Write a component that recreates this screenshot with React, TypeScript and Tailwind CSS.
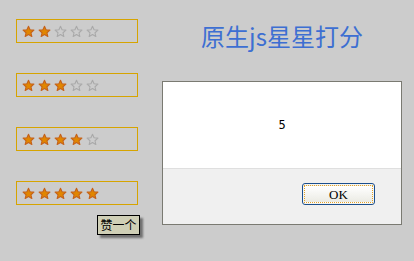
import React from "react";

const STAR = "M12 2.2l2.9 6.6 7.1.7-5.4 4.8 1.6 7-6.2-3.7-6.2 3.7 1.6-7-5.4-4.8 7.1-.7z";

const Star = ({ on }: { on: boolean }) => (
  <svg width="13" height="13" viewBox="0 0 24 24" className="block">
    <path
      d={STAR}
      fill={on ? "#e18600" : "#cccccc"}
      stroke={on ? "#c4621c" : "#a9a9a9"}
      strokeWidth="2"
      strokeLinejoin="round"
    />
  </svg>
);

const Rating = ({ value, tip }: { value: number; tip?: boolean }) => (
  <div className="relative w-[122px] h-[24px] border border-[#d6a400] flex items-center pl-[5px] gap-[3px]">
    {[1, 2, 3, 4, 5].map((n) => (
      <Star key={n} on={n <= value} />
    ))}
    {tip && (
      <div className="absolute left-[80px] top-[33px] w-[43px] h-[20px] border border-black bg-[#cfcfb6] flex items-center justify-center text-[12px] leading-none text-black shadow-[3px_3px_2px_rgba(0,0,0,0.45)] font-['Noto_Sans_CJK_SC',sans-serif]">
        赞一个
      </div>
    )}
  </div>
);

export default function App() {
  return (
    <div className="w-[414px] h-[261px] bg-[#cccccc] flex overflow-hidden">
      <div className="w-[162px] pl-[16px] pt-[19px] flex flex-col gap-[30px]">
        <Rating value={2} />
        <Rating value={3} />
        <Rating value={4} />
        <Rating value={5} tip />
      </div>
      <div className="w-[240px] flex flex-col items-center">
        <h1 className="mt-[24px] h-[24px] text-[24px] leading-[24px] text-[#3d6fd2] font-['Noto_Sans_CJK_SC',sans-serif] whitespace-nowrap">
          原生js星星打分
        </h1>
        <div className="mt-[33px] w-[240px] h-[144px] border border-[#7a7a72] flex flex-col">
          <div className="h-[87px] bg-white border-b border-[#dfdfdf] flex items-center justify-center text-[12px] text-black font-['DejaVu_Sans_Mono',monospace]">
            5
          </div>
          <div className="flex-1 bg-[#f0f0f0] flex justify-end items-start pt-[14px] pr-[26px]">
            <div className="w-[73px] h-[22px] rounded-[3px] border border-[#1b4e8d] p-[1px] bg-[#f5f5f0]">
              <div className="w-full h-full border border-dotted border-[#e3a22a] bg-gradient-to-b from-white to-[#ebebe4] flex items-center justify-center text-[13px] leading-none text-black font-['Liberation_Serif',serif]">
                OK
              </div>
            </div>
          </div>
        </div>
      </div>
    </div>
  );
}
